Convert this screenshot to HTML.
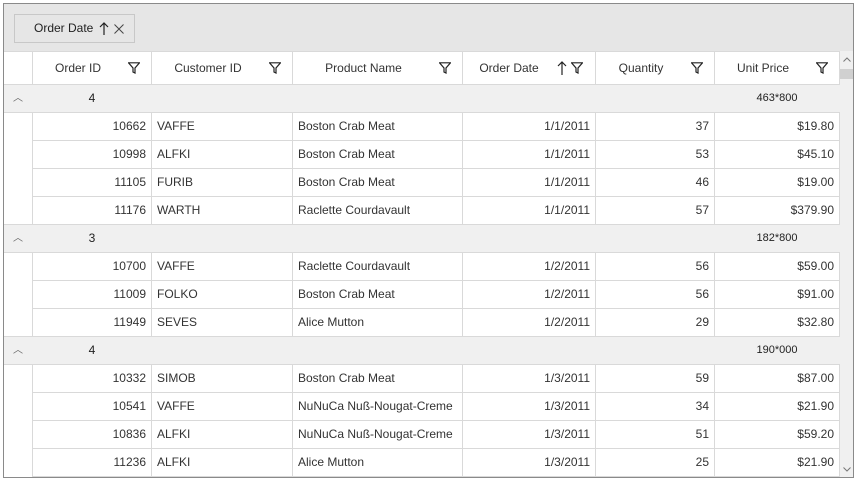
<!DOCTYPE html>
<html><head><meta charset="utf-8"><style>
*{box-sizing:border-box;margin:0;padding:0}
body{width:857px;height:480px;background:#fff;font-family:"Liberation Sans",sans-serif;font-size:12px;color:#333;position:relative;overflow:hidden}
#frame{position:absolute;left:3px;top:3px;width:851px;height:475px;border:1px solid #8a8a8a;overflow:hidden;background:#fff}
#gp{position:absolute;left:0;top:0;width:849px;height:47px;background:#e6e6e6}
#btn{position:absolute;left:10px;top:10px;width:121px;height:29px;border:1px solid #c8c8c8;background:#e6e6e6;font-size:12px;color:#222;line-height:27px;padding-left:19px}
table{position:absolute;left:0;top:47px;border-collapse:collapse;table-layout:fixed}
td{height:28px;border:1px solid #d9d9d9;padding:0 5px 2px;white-space:nowrap;overflow:hidden}
tr.h td{height:33px;text-align:center;color:#333;position:relative;border-top:1px solid #d9d9d9;padding:0 28px 0 0}
td.r{text-align:right}
td.ind{border-top:none;border-bottom:none;border-left:none}
tr.g td{background:#f0f0f0;border-left:none;border-right:none;border-top:1px solid #d9d9d9;border-bottom:1px solid #d9d9d9}
.f{position:absolute;right:11px;top:10px}
#sb{position:absolute;left:836px;top:47px;width:13px;height:427px;background:#f0f0f0}
</style></head><body>
<div id="frame">
<div id="gp"><div id="btn">Order Date <svg style="position:absolute;left:84px;top:7px" width="10" height="13" viewBox="0 0 10 13"><path d="M5 1V13M1 5L5 1L9 5" fill="none" stroke="#222" stroke-width="1.2"/></svg><svg style="position:absolute;left:99px;top:9px" width="10" height="10" viewBox="0 0 10 10"><path d="M0.5 0.5L9.5 9.5M9.5 0.5L0.5 9.5" stroke="#444" stroke-width="1"/></svg></div></div>
<table>
<colgroup><col style="width:28px"><col style="width:119px"><col style="width:141px"><col style="width:170px"><col style="width:133px"><col style="width:119px"><col style="width:125px"></colgroup>
<tr class="h"><td style="border-left:none"></td>
<td>Order ID<svg class="f" width="12" height="12" viewBox="0 0 12 12"><path d="M0.5 0.8H11.5L7 6V11L5 10V6Z" fill="none" stroke="#222" stroke-width="1.2"/></svg></td>
<td>Customer ID<svg class="f" width="12" height="12" viewBox="0 0 12 12"><path d="M0.5 0.8H11.5L7 6V11L5 10V6Z" fill="none" stroke="#222" stroke-width="1.2"/></svg></td>
<td>Product Name<svg class="f" width="12" height="12" viewBox="0 0 12 12"><path d="M0.5 0.8H11.5L7 6V11L5 10V6Z" fill="none" stroke="#222" stroke-width="1.2"/></svg></td>
<td style="padding-right:40px">Order Date<svg style="position:absolute;right:28px;top:9px" width="10" height="14" viewBox="0 0 10 14"><path d="M5 1V14M1 5L5 1L9 5" fill="none" stroke="#222" stroke-width="1.2"/></svg><svg class="f" style="right:12px" width="12" height="12" viewBox="0 0 12 12"><path d="M0.5 0.8H11.5L7 6V11L5 10V6Z" fill="none" stroke="#222" stroke-width="1.2"/></svg></td>
<td>Quantity<svg class="f" width="12" height="12" viewBox="0 0 12 12"><path d="M0.5 0.8H11.5L7 6V11L5 10V6Z" fill="none" stroke="#222" stroke-width="1.2"/></svg></td>
<td>Unit Price<svg class="f" width="12" height="12" viewBox="0 0 12 12"><path d="M0.5 0.8H11.5L7 6V11L5 10V6Z" fill="none" stroke="#222" stroke-width="1.2"/></svg></td></tr>
<tr class="g"><td style="color:#666;font-size:10px;padding-left:9px;padding-bottom:4px">︿</td><td style="text-align:center;color:#222">4</td><td></td><td></td><td></td><td></td><td style="text-align:center;color:#222;font-size:11px">463*800</td></tr>
<tr><td class="ind"></td><td class="r">10662</td><td>VAFFE</td><td>Boston Crab Meat</td><td class="r">1/1/2011</td><td class="r">37</td><td class="r">$19.80</td></tr>
<tr><td class="ind"></td><td class="r">10998</td><td>ALFKI</td><td>Boston Crab Meat</td><td class="r">1/1/2011</td><td class="r">53</td><td class="r">$45.10</td></tr>
<tr><td class="ind"></td><td class="r">11105</td><td>FURIB</td><td>Boston Crab Meat</td><td class="r">1/1/2011</td><td class="r">46</td><td class="r">$19.00</td></tr>
<tr><td class="ind"></td><td class="r">11176</td><td>WARTH</td><td>Raclette Courdavault</td><td class="r">1/1/2011</td><td class="r">57</td><td class="r">$379.90</td></tr>
<tr class="g"><td style="color:#666;font-size:10px;padding-left:9px;padding-bottom:4px">︿</td><td style="text-align:center;color:#222">3</td><td></td><td></td><td></td><td></td><td style="text-align:center;color:#222;font-size:11px">182*800</td></tr>
<tr><td class="ind"></td><td class="r">10700</td><td>VAFFE</td><td>Raclette Courdavault</td><td class="r">1/2/2011</td><td class="r">56</td><td class="r">$59.00</td></tr>
<tr><td class="ind"></td><td class="r">11009</td><td>FOLKO</td><td>Boston Crab Meat</td><td class="r">1/2/2011</td><td class="r">56</td><td class="r">$91.00</td></tr>
<tr><td class="ind"></td><td class="r">11949</td><td>SEVES</td><td>Alice Mutton</td><td class="r">1/2/2011</td><td class="r">29</td><td class="r">$32.80</td></tr>
<tr class="g"><td style="color:#666;font-size:10px;padding-left:9px;padding-bottom:4px">︿</td><td style="text-align:center;color:#222">4</td><td></td><td></td><td></td><td></td><td style="text-align:center;color:#222;font-size:11px">190*000</td></tr>
<tr><td class="ind"></td><td class="r">10332</td><td>SIMOB</td><td>Boston Crab Meat</td><td class="r">1/3/2011</td><td class="r">59</td><td class="r">$87.00</td></tr>
<tr><td class="ind"></td><td class="r">10541</td><td>VAFFE</td><td>NuNuCa Nuß-Nougat-Creme</td><td class="r">1/3/2011</td><td class="r">34</td><td class="r">$21.90</td></tr>
<tr><td class="ind"></td><td class="r">10836</td><td>ALFKI</td><td>NuNuCa Nuß-Nougat-Creme</td><td class="r">1/3/2011</td><td class="r">51</td><td class="r">$59.20</td></tr>
<tr><td class="ind"></td><td class="r">11236</td><td>ALFKI</td><td>Alice Mutton</td><td class="r">1/3/2011</td><td class="r">25</td><td class="r">$21.90</td></tr>
</table>
<div id="sb">
<svg style="position:absolute;left:3px;top:6px" width="8" height="5" viewBox="0 0 8 5"><path d="M0.5 4.5L4 1L7.5 4.5" fill="none" stroke="#777"/></svg>
<div style="position:absolute;left:0;top:18px;width:13px;height:10px;background:#d0d0d0"></div>
<svg style="position:absolute;left:3px;top:416px" width="8" height="5" viewBox="0 0 8 5"><path d="M0.5 0.5L4 4L7.5 0.5" fill="none" stroke="#777"/></svg>
</div>
</div>
</body></html>
